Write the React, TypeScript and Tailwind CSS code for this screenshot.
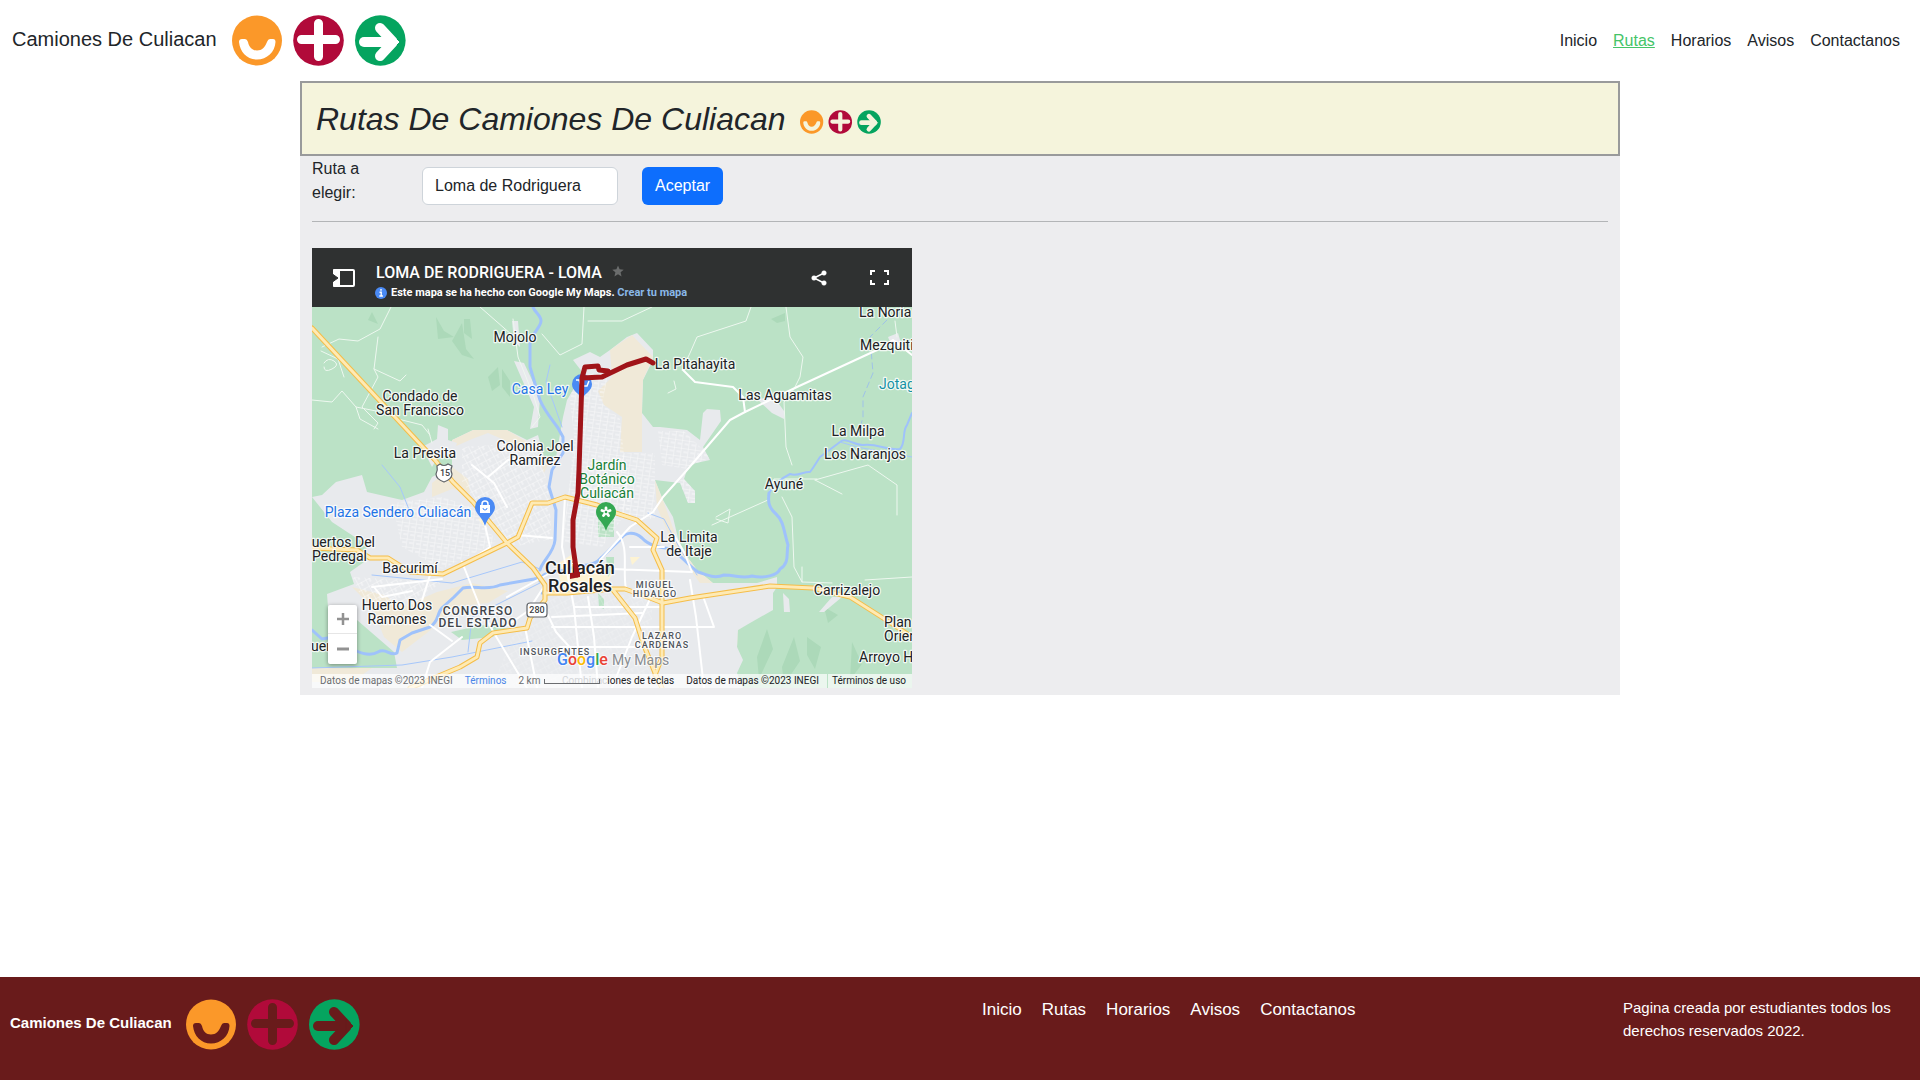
import { useState } from "react";

type Label = {
  x: number;
  y: number;
  lines: string[];
  anchor?: "start" | "middle" | "end";
  color?: string;
  step?: number;
};

const places: Label[] = [
  { x: 203, y: 35, lines: ["Mojolo"] },
  { x: 108, y: 94, lines: ["Condado de", "San Francisco"] },
  { x: 113, y: 151, lines: ["La Presita"] },
  { x: 223, y: 144, lines: ["Colonia Joel", "Ramírez"] },
  { x: 228, y: 87, lines: ["Casa Ley"], color: "#1f74e6" },
  { x: 383, y: 62, lines: ["La Pitahayita"] },
  { x: 547, y: 10, lines: ["La Noria"], anchor: "start" },
  { x: 548, y: 43, lines: ["Mezquitillo"], anchor: "start" },
  { x: 567, y: 82, lines: ["Jotagua"], anchor: "start", color: "#1592a6" },
  { x: 473, y: 93, lines: ["Las Aguamitas"] },
  { x: 546, y: 129, lines: ["La Milpa"] },
  { x: 553, y: 152, lines: ["Los Naranjos"] },
  { x: 472, y: 182, lines: ["Ayuné"] },
  { x: 295, y: 163, lines: ["Jardín", "Botánico", "Culiacán"], color: "#188038" },
  { x: 86, y: 210, lines: ["Plaza Sendero Culiacán"], color: "#1f74e6" },
  { x: 63, y: 240, lines: ["Huertos Del"], anchor: "end" },
  { x: 0, y: 254, lines: ["Pedregal"], anchor: "start" },
  { x: 98, y: 266, lines: ["Bacurimí"] },
  { x: 85, y: 303, lines: ["Huerto Dos", "Ramones"] },
  { x: 377, y: 235, lines: ["La Limita", "de Itaje"] },
  { x: 535, y: 288, lines: ["Carrizalejo"] },
  { x: 572, y: 320, lines: ["Plan de", "Oriente"], anchor: "start" },
  { x: 547, y: 355, lines: ["Arroyo Hondo"], anchor: "start" },
  { x: -1, y: 344, lines: ["uertos"], anchor: "start" },
];

const districts: Label[] = [
  { x: 343, y: 281, lines: ["MIGUEL", "HIDALGO"] },
  { x: 350, y: 332, lines: ["LAZARO", "CARDENAS"] },
  { x: 243, y: 348, lines: ["INSURGENTES"] },
];

const urban =
  "M140 133L161 123H195L215 133L226 128L232 150L244 150L251 110L255 93L271 66L261 53L278 45L288 50L298 43L315 30L325 26L341 43V53L331 73L330 106L341 120H348L375 123L388 133L391 106L395 102L408 103L409 114L391 140L398 153L384 156L376 160L372 172L383 184V196H376L368 176L343 173L351 193L361 210L368 240L385 263L401 276H445L465 270V280L461 286V303L438 316L426 323L425 340L431 353L425 366L431 381H0V361H85L82 345L45 313L16 300L15 287L42 277L38 265L52 255L55 238L20 215L0 190L10 188L24 175L50 168L55 185L90 193L112 185L120 170L140 160Z";

const yellowRoads = [
  "M0 21L123 153L141 175L161 195L195 236L221 261L233 278V293L218 311L215 321L181 326L168 336L165 350L148 360L98 381",
  "M0 241L45 243L58 251H76L98 265L131 267L195 236L206 230L220 196H236L253 190L285 198L301 205L325 213L345 231L341 243L350 263V350L343 368",
  "M233 286H255L301 282H313L338 291L351 296L378 291L458 279L501 281L538 290L571 311L600 330",
  "M301 283L323 311L331 336L343 366L350 381",
];

const whiteRoads = [
  "M600 48L581 33L565 43L485 80L433 105L418 113L375 163L351 190L341 205L318 220L288 253",
  "M371 63L383 75L421 80L431 90L433 105",
  "M150 255L168 300L182 326L215 381",
  "M170 205L178 240L154 256",
  "M378 273L384 310L392 381",
  "M213 320L225 381M195 290L240 265M233 278L216 304L196 318",
  "M262 300H350M240 320H402L392 292M248 340L330 340",
  "M300 381L320 330L338 292M118 318L140 334M110 381L118 355L150 330",
  "M253 190L250 240L262 300L270 381",
  "M305 225C318 240 310 262 314 282M318 240H352M300 262L380 265L372 245L362 228",
  "M205 228L240 231M176 170L196 153L226 150M195 200L182 176L160 158",
  "M60 280L130 272M62 280L70 290L100 284M108 300L118 268",
  "M232 300L244 325L262 345M276 290L282 330L286 381M240 310L330 306",
];

const thinRoads = [
  "M79 0L68 22L46 34L27 32L10 40M66 30L62 62L66 70L50 100L66 116L62 122",
  "M0 93L20 95L30 84L44 100L64 104M44 100L48 112L66 122",
  "M168 0L200 28M230 27L248 48L270 37L272 0M276 14H310L340 0M201 12L206 50L222 90L228 110L220 120",
  "M86 112L110 118L118 128M62 62L88 74L94 68M116 122L120 136",
  "M439 0L434 14L385 30L378 46L370 63M474 0L478 30L491 50L488 70L482 82L472 95L474 140L480 158",
  "M583 14L585 30M456 193L400 218M404 210L418 202L416 216L404 212M470 190L480 210L482 260L490 275L520 276M490 260L490 275",
  "M503 173L530 187M503 173L556 158L585 178V208M456 190L462 172L505 172M553 273L600 270",
  "M9 44L26 52L32 70M12 56Q16 50 22 54T20 62T12 60M356 86L364 82L362 74",
];

const rivers = [
  "M221 0C223 6 229 8 229 14S220 26 218 36V60L224 80L228 93C232 103 238 110 246 121L251 130V146L240 163L237 180L244 203L243 233C242 246 230 254 228 263",
  "M230 286C236 278 228 270 222 272L188 278C176 284 162 278 151 281L142 290L131 300C124 306 128 314 118 320L100 326L88 333L85 346C78 350 74 340 66 345S44 346 36 338L21 330L10 332L0 323",
  "M228 274C230 262 250 266 262 260C276 258 284 258 290 250L308 233C312 225 322 224 330 231C338 240 352 241 360 242C370 250 376 258 386 265C396 268 402 272 412 268C424 268 430 272 440 269C452 272 466 268 468 262C478 256 474 246 476 238C472 226 472 214 464 207C456 200 456 194 457 186",
];

const thinRivers = [
  "M457 186C462 178 468 172 478 167C486 170 492 164 498 165C502 160 504 156 508 150L528 135C534 130 542 138 551 138C566 136 574 144 588 142C594 136 590 124 595 118L600 106",
];

const streams = [
  "M238 58L234 75L243 100L250 120M70 158L88 180L100 210M0 361L90 358L140 350L220 334M60 268L140 276L210 255L228 262",
  "M336 206L352 212L368 242L385 268M156 345L160 310L228 276",
  "M528 135L545 140L600 150",
];

const hills = [
  "M124 10l8 14 10 6-16 2zM140 34l10-18 4 26 8 10-12-4zM152 12l6 0 2 20-8-6z",
  "M60 5l6 12-10-4zM176 70l10-10 2 18-8 6zM190 62l8 12 0 16-8-10z",
  "M445 350l10-28 6 20-14 30zM470 360l12-30 6 24-16 24zM495 330l14 10-6 22-8-14zM540 335l10 22-12 16zM512 300l14 8-10 8z",
  "M459 12l14-6 0 8-8 2z",
];

function BusLogos({ className }: { className: string }) {
  return (
    <svg viewBox="0 0 174 51" className={className} fill="none" stroke="currentColor" aria-hidden="true">
      <circle cx="25" cy="25.500" r="25" fill="#fb9829" stroke="none" />
      <path
        d="M7 27Q7 24 10 24H13Q15 24 16 27C17 32 20 35.500 25 35.500S33 32 35 27Q36 24 38 24H41Q43.500 24 43.500 27C43 37 35 44.500 25 44.500S8 37 7 27Z"
        fill="currentColor"
        stroke="none"
      />
      <circle cx="86.500" cy="25.500" r="25.300" fill="#b10a3a" stroke="none" />
      <path d="M69.500 24.500H103.500M86.500 8.500V41.500" strokeWidth="9" strokeLinecap="round" />
      <circle cx="148.300" cy="25.500" r="25.300" fill="#05a45f" stroke="none" />
      <path d="M132 27H160" strokeWidth="10" strokeLinecap="round" />
      <path d="M148 13L161 27L148 41" strokeWidth="10" strokeLinecap="round" strokeLinejoin="bevel" />
      <path d="M160 20L167 27L160 34Z" fill="currentColor" strokeWidth="1" />
    </svg>
  );
}

function MapLabel({ label }: { label: Label }) {
  return (
    <text
      fill={label.color ?? "#202124"}
      textAnchor={label.anchor ?? "middle"}
      stroke="#ffffff"
      strokeOpacity="0.8"
      strokeWidth="2.500"
      strokeLinejoin="round"
      paintOrder="stroke"
    >
      {label.lines.map((line, i) => (
        <tspan key={line} x={label.x} y={label.y + i * (label.step ?? 14)}>
          {line}
        </tspan>
      ))}
    </text>
  );
}

function MapDrawing() {
  return (
    <svg
      viewBox="0 0 600 381"
      className="block h-[381px] w-full font-[Roboto,sans-serif]"
      role="img"
      aria-label="Mapa de la ruta Loma de Rodriguera"
    >
      <defs>
        <pattern id="streets" width="7" height="8" patternUnits="userSpaceOnUse" patternTransform="rotate(8)">
          <path d="M0 0H7M0 0V8M3 4H7" stroke="#fafbfc" strokeWidth="0.900" fill="none" />
        </pattern>
        <pattern id="streetsTilted" width="9" height="7" patternUnits="userSpaceOnUse" patternTransform="rotate(-28)">
          <path d="M0 0H9M0 0V7M4 0V4" stroke="#fafbfc" strokeWidth="0.900" fill="none" />
        </pattern>
        <clipPath id="city">
          <path d={urban} />
        </clipPath>
      </defs>
      <rect width="600" height="381" fill="#bbe2c6" />
      <g fill="#acd9b9">
        {hills.map((d) => (
          <path key={d} d={d} />
        ))}
      </g>
      <path d={urban} fill="#e8eaed" />
      <g clipPath="url(#city)">
        <g fill="#f0e9d8">
          <path d="M298 43L320 28L341 50L331 73L330 106V145H308L310 110L292 98L286 84L300 70Z" />
          <path d="M140 133L161 123H195L215 135L205 140L190 132L176 126L160 132L142 140Z" />
          <path d="M140 160L156 172L158 186L140 182L120 190V176Z" />
          <path d="M40 280L72 288L90 300L125 285L160 276L196 284L176 296L140 300L120 322L90 345L72 330L60 300Z" />
          <path d="M343 173L352 196L368 240L385 262L401 276H388L362 240L345 200Z" />
          <path d="M0 361H60L40 375H0ZM426 323L440 316L430 345L425 340ZM226 150H240L232 166Z" />
        </g>
        <path d="M244 258L262 246L268 258L300 268L292 280L250 280ZM318 250H328L320 258ZM166 212L176 208L174 222Z" fill="#fdf3d3" />
        <path d="M139 325L170 318L200 322L180 330L150 333ZM286 205H302V230H286ZM294 250H302V262L296 270ZM286 286L292 292V302L287 300Z" fill="#bbe2c6" />
        <path d="M256 75L298 60L290 96L308 112L318 200L290 240L250 235L256 190L262 130Z" fill="url(#streets)" />
        <path d="M150 140L225 135L236 180L240 232L200 240L150 175Z" fill="url(#streetsTilted)" />
        <path d="M80 196L130 190L160 200L185 235L130 262L90 240Z" fill="url(#streets)" />
        <path d="M346 124L372 124L398 150L376 162L350 158ZM310 146H343V212H310ZM368 172H385V196H372Z" fill="url(#streets)" />
        <path d="M40 270L130 275L100 300L50 292Z" fill="url(#streetsTilted)" />
        <path d="M240 288H340V381H180L200 330Z" fill="url(#streetsTilted)" opacity="0.400" />
      </g>
      <path d="M126 118L136 122V133L145 136L142 146L126 150L120 160L110 140L125 132Z" fill="#e8eaed" />
      <path
        d="M200 14H206L208 40L202 34ZM202 54L212 56L228 90L226 120L218 122L222 100ZM471 286L477 292L478 305L472 305ZM520 290H530L512 305H507ZM445 92L462 90L472 104V112L460 106ZM576 30L586 26L590 40H580Z"
        fill="#e8eaed"
      />
      <g fill="none" strokeLinejoin="round" strokeLinecap="round">
        {thinRoads.map((d) => (
          <path key={d} d={d} stroke="#eef8f0" strokeWidth="1" />
        ))}
        {rivers.map((d) => (
          <path key={d} d={d} stroke="#9fc2fb" strokeWidth="3" />
        ))}
        {thinRivers.map((d) => (
          <path key={d} d={d} stroke="#9fc2fb" strokeWidth="2" />
        ))}
        {streams.map((d) => (
          <path key={d} d={d} stroke="#a6c7fb" strokeWidth="1" />
        ))}
        <path d="M575 13L558 30L561 66L551 90V110L547 125" stroke="#9fc2e8" strokeDasharray="6 4" />
        {whiteRoads.map((d) => (
          <path key={d} d={d} stroke="#ffffff" strokeWidth="2" />
        ))}
        {yellowRoads.map((d) => (
          <path key={d} d={d} stroke="#f5bd48" strokeWidth="5" />
        ))}
        {yellowRoads.map((d) => (
          <path key={d} d={d} stroke="#feeab4" strokeWidth="3" />
        ))}
      </g>

      <g strokeWidth="1.200" stroke="#5f6368" fill="#ffffff">
        <path d="M125 159L128 157Q132 160 136 157L140 159Q138 163 140 167Q140 172 132 175Q124 172 124 167Q126 163 125 159Z" />
        <rect x="215" y="296" width="20" height="14" rx="3" />
      </g>
      <g fontSize="9" fontWeight="500" textAnchor="middle" fill="#3c4043">
        <text x="133" y="169">15</text>
        <text x="225" y="306">280</text>
      </g>

      <g>
        <path d="M173 219C170 209 163 207 163 200A10 10 0 0 1 183 200C183 207 176 209 173 219Z" fill="#4a8af4" />
        <path d="M168 198H178V206H168Z" fill="#ffffff" />
        <path d="M170 199V197A3 3 0 0 1 176 197V199" fill="none" stroke="#ffffff" strokeWidth="1.500" />
        <path d="M171 201A2 2 0 0 0 175 201" fill="none" stroke="#4a8af4" />
      </g>
      <g>
        <path d="M270 92C267 86 260 84 260 77A10 10 0 0 1 280 77C280 84 273 86 270 92Z" fill="#4a8af4" />
        <path d="M264 73H267L269 79H275L277 74" fill="none" stroke="#ffffff" strokeWidth="1.500" />
      </g>
      <g>
        <path d="M294 224C291 214 284 212 284 205A10 10 0 0 1 304 205C304 212 297 214 294 224Z" fill="#34a853" />
        <path
          d="M294 205V201M294 205L298 203.500M294 205L296.500 208.500M294 205L291.500 208.500M294 205L290 203.500"
          stroke="#ffffff"
          strokeWidth="2.800"
          strokeLinecap="round"
        />
        <circle cx="294" cy="205" r="1.300" fill="#34a853" />
      </g>

      <g fontSize="14">
        {places.map((p) => (
          <MapLabel key={p.lines[0]} label={p} />
        ))}
      </g>
      <g fontSize="9" fontWeight="500" className="tracking-[1px]">
        {districts.map((d) => (
          <MapLabel key={d.lines[0]} label={{ ...d, color: "#50555b", step: 9 }} />
        ))}
      </g>
      <g fontSize="12" fontWeight="500" className="tracking-[1px]">
        <MapLabel label={{ x: 166, y: 308, lines: ["CONGRESO", "DEL ESTADO"], color: "#40444a", step: 12 }} />
      </g>
      <g fontSize="18" fontWeight="500">
        <MapLabel label={{ x: 268, y: 267, lines: ["Culiacán", "Rosales"], step: 18 }} />
      </g>

      <path
        d="M341 56L334 52L315 58L290 70L270 71L273 60L286 59L287 63L296 64M270 71L267 163L266 186L261 213V240L265 268"
        fill="none"
        stroke="#a01419"
        strokeWidth="5"
        strokeLinejoin="round"
        strokeLinecap="round"
      />
      <path d="M258 266L268 265V270L258 272Z" fill="#a01419" />

      <g stroke="#ffffff" strokeOpacity="0.700" strokeWidth="2" paintOrder="stroke">
        <text x="245" y="358" fontSize="16" fontWeight="500">
          <tspan fill="#4285f4">G</tspan>
          <tspan fill="#ea4335">o</tspan>
          <tspan fill="#fbbc04">o</tspan>
          <tspan fill="#4285f4">g</tspan>
          <tspan fill="#34a853">l</tspan>
          <tspan fill="#ea4335">e</tspan>
        </text>
        <text x="300" y="358" fontSize="14" fill="#8a8d91">
          My Maps
        </text>
      </g>
    </svg>
  );
}

function MapHeader() {
  return (
    <div className="flex h-[59px] items-start bg-[#2f3131] text-white">
      <button type="button" aria-label="Mostrar leyenda" className="ml-[21px] mt-[21px]">
        <svg viewBox="0 0 22 18" className="h-[18px] w-[22px]" fill="none">
          <rect x="1" y="1" width="20" height="16" rx="1" stroke="#fff" strokeWidth="2" />
          <rect x="0" y="0" width="7" height="18" rx="1" fill="#fff" />
          <path d="M7.500 2V16" stroke="#2f3131" />
          <path d="M0 9H3M0 5.500L5 9L0 12.500Z" stroke="#2f3131" fill="#2f3131" />
        </svg>
      </button>
      <div className="ml-[21px] mt-[15px]">
        <div className="flex items-center gap-[10px]">
          <h2 className="text-[16px] font-medium leading-5">LOMA DE RODRIGUERA - LOMA</h2>
          <svg viewBox="0 0 24 24" className="mb-1 h-3 w-3" fill="#6b6d6d" aria-hidden="true">
            <path d="M12 1l3.200 7.600 8.300.7-6.300 5.400 1.900 8.100L12 18.500l-7.100 4.300 1.900-8.100L.5 9.300l8.300-.7z" />
          </svg>
        </div>
        <p className="flex items-center gap-1 text-[11px] font-bold leading-5">
          <svg viewBox="0 0 12 12" className="-ml-px h-3 w-3" aria-hidden="true">
            <circle cx="6" cy="6" r="6" fill="#4a8af4" />
            <path d="M6 2V3.800M4.500 5.300H6.200V9M4.300 9H7.900" stroke="#fff" strokeWidth="1.400" fill="none" />
          </svg>
          <span>
            Este mapa se ha hecho con Google My Maps.{" "}
            <a href="#crear" className="text-[#8ab8e8]">
              Crear tu mapa
            </a>
          </span>
        </p>
      </div>
      <button type="button" aria-label="Compartir" className="ml-auto mr-[43px] mt-[22px]">
        <svg viewBox="0 0 16 16" className="h-4 w-4" fill="#fff" stroke="#fff">
          <path d="M13 3L3 8L13 13" fill="none" strokeWidth="1.500" />
          <circle cx="13" cy="3" r="2.300" strokeWidth="0.500" />
          <circle cx="3" cy="8" r="2.300" strokeWidth="0.500" />
          <circle cx="13" cy="13" r="2.300" strokeWidth="0.500" />
        </svg>
      </button>
      <button type="button" aria-label="Pantalla completa" className="mr-[23px] mt-[22px]">
        <svg viewBox="0 0 19 15" className="h-[15px] w-[19px]" fill="none" stroke="#fff" strokeWidth="2">
          <path d="M1 5V1H5M14 1H18V5M18 10V14H14M5 14H1V10" />
        </svg>
      </button>
    </div>
  );
}

function RouteMap() {
  return (
    <section className="relative w-[600px] max-w-full overflow-hidden font-[Roboto,sans-serif]">
      <MapHeader />
      <MapDrawing />
      <div className="absolute bottom-6 left-4 flex w-[29px] flex-col divide-y divide-[#e6e6e6] rounded-xs bg-white shadow-[0_1px_4px_rgba(0,0,0,0.4)]">
        <button type="button" aria-label="Acercar" className="flex h-[29px] items-center justify-center">
          <svg viewBox="0 0 12 12" className="h-3 w-3" stroke="#929292" strokeWidth="2.500">
            <path d="M0 6H12M6 0V12" />
          </svg>
        </button>
        <button type="button" aria-label="Alejar" className="flex h-[30px] items-center justify-center">
          <svg viewBox="0 0 12 12" className="h-3 w-3" stroke="#929292" strokeWidth="3">
            <path d="M0 6H12" />
          </svg>
        </button>
      </div>
      <div className="absolute inset-x-0 bottom-0 flex h-[14px] items-center justify-end whitespace-nowrap bg-white/70 text-[10px] leading-[14px] text-[#202124]">
        <button type="button" className="pr-2">
          <span className="text-[#d3d5d8]">Combinac</span>iones de teclas
        </button>
        <span className="px-1">Datos de mapas ©2023 INEGI</span>
        <a href="#uso" className="ml-1 border-l border-[#bbe2c6] pl-1 pr-1.5">
          Términos de uso
        </a>
      </div>
      <div className="absolute bottom-0 left-0 flex h-[14px] items-center whitespace-nowrap pl-2 text-[10px] leading-[14px] text-[#6b6d70]">
        <span>Datos de mapas ©2023 INEGI</span>
        <a href="#terminos" className="ml-3 text-[#4a86e8]">
          Términos
        </a>
        <span className="ml-3">2 km</span>
        <span className="ml-1 h-[5px] w-14 border border-t-0 border-[#6b6d70]" />
      </div>
    </section>
  );
}

const links = ["Inicio", "Rutas", "Horarios", "Avisos", "Contactanos"];

export default function App() {
  const [route, setRoute] = useState("Loma de Rodriguera");
  return (
    <div className="flex min-h-screen flex-col bg-white font-['Liberation_Sans',Arial,sans-serif] text-base leading-6 text-[#212529]">
      <header className="flex h-[81px] items-center justify-between pl-3 pr-5">
        <a href="#inicio" className="flex items-center gap-[15px] text-xl">
          <span className="pb-1">Camiones De Culiacan</span>
          <BusLogos className="h-[51px] w-[174px] text-white" />
        </a>
        <nav className="flex gap-4">
          {links.map((l) => (
            <a key={l} href={`#${l}`} className={l === "Rutas" ? "text-[#45c468] underline" : ""}>
              {l}
            </a>
          ))}
        </nav>
      </header>

      <main className="mx-auto mb-6 w-full max-w-[1320px] bg-[#ededef]">
        <div className="flex h-[75px] items-center gap-[14px] border-2 border-[#999a9b] bg-[#f5f4dc] px-[14px]">
          <h1 className="text-[32px] italic leading-10">Rutas De Camiones De Culiacan</h1>
          <BusLogos className="mt-[6px] h-6 w-[81px] text-[#f5f4dc]" />
        </div>
        <div className="px-3 pb-[7px] pt-px">
          <form className="flex items-start" onSubmit={(e) => e.preventDefault()}>
            <label htmlFor="ruta" className="mr-6 w-[86px]">
              Ruta a elegir:
            </label>
            <input
              id="ruta"
              type="text"
              value={route}
              onChange={(e) => setRoute(e.target.value)}
              className="mt-[10px] h-[38px] w-[196px] rounded-md border border-[#ced4da] bg-white px-3"
            />
            <button type="submit" className="ml-6 mt-[10px] h-[38px] rounded-md bg-[#0d6efd] px-[13px] text-white">
              Aceptar
            </button>
          </form>
          <hr className="mb-[26px] mt-4 border-[#b3b5b7]" />
          <RouteMap />
        </div>
      </main>

      <footer className="mt-auto grid h-[103px] grid-cols-[982fr_641fr_297fr] items-start bg-[#691b1b] text-white">
        <a href="#inicio" className="mt-[22px] flex items-center gap-[14px] pl-[10px] text-[15px] font-bold">
          <span className="pb-1">Camiones De Culiacan</span>
          <BusLogos className="h-[51px] w-[174px] text-[#691b1b]" />
        </a>
        <nav className="mt-[21px] flex gap-5 text-[17px]">
          {links.map((l) => (
            <a key={l} href={`#${l}`}>
              {l}
            </a>
          ))}
        </nav>
        <p className="mt-[19px] pr-4 text-[15px] leading-[23px]">Pagina creada por estudiantes todos los derechos reservados 2022.</p>
      </footer>
    </div>
  );
}
